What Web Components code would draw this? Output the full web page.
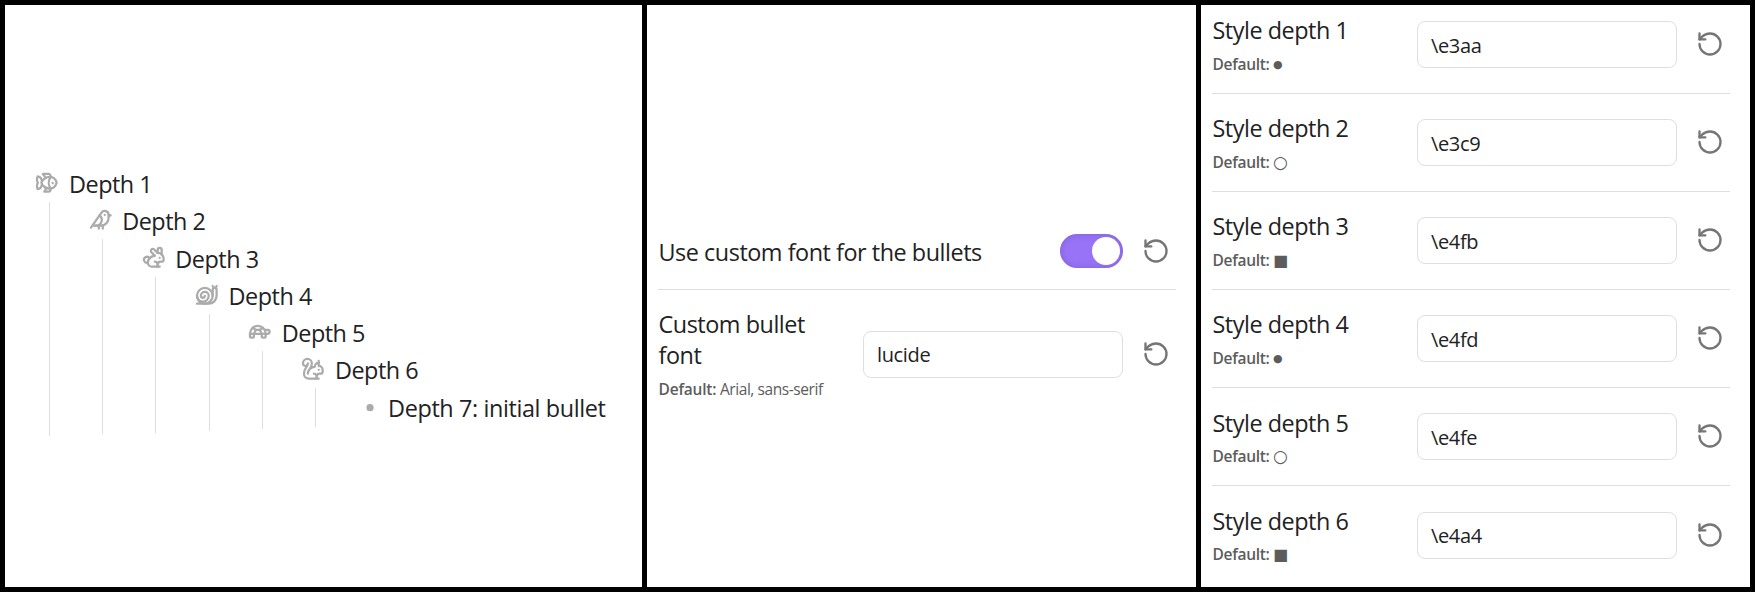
<!DOCTYPE html>
<html lang="en">
<head>
<meta charset="utf-8">
<title>List bullet settings</title>
<style>
html,body{margin:0;height:592px;background:#000;overflow:hidden}
body{font-family:"Open Sans","Noto Sans",sans-serif;color:#222}
</style>
</head>
<body>
<bullet-board>
  <tree-item icon="fish" label="Depth 1" slot="tree">
    <tree-item icon="bird" label="Depth 2">
      <tree-item icon="rabbit" label="Depth 3">
        <tree-item icon="snail" label="Depth 4">
          <tree-item icon="turtle" label="Depth 5">
            <tree-item icon="squirrel" label="Depth 6">
              <tree-item icon="dot" label="Depth 7: initial bullet"></tree-item>
            </tree-item>
          </tree-item>
        </tree-item>
      </tree-item>
    </tree-item>
  </tree-item>

  <setting-row slot="font" style="--h:77px">Use custom font for the bullets<toggle-switch slot="control"></toggle-switch></setting-row>
  <setting-row slot="font" class="last" style="--h:129px">Custom bullet font<span slot="desc"><b style="font-weight:600;letter-spacing:-.2px">Default:</b> Arial, sans-serif</span><text-box slot="control">lucide</text-box></setting-row>

  <setting-row slot="depths">Style depth 1<bullet-default slot="desc" kind="disc">●</bullet-default><text-box slot="control">\e3aa</text-box></setting-row>
  <setting-row slot="depths">Style depth 2<bullet-default slot="desc" kind="circle">○</bullet-default><text-box slot="control">\e3c9</text-box></setting-row>
  <setting-row slot="depths">Style depth 3<bullet-default slot="desc" kind="square">■</bullet-default><text-box slot="control">\e4fb</text-box></setting-row>
  <setting-row slot="depths">Style depth 4<bullet-default slot="desc" kind="disc">●</bullet-default><text-box slot="control">\e4fd</text-box></setting-row>
  <setting-row slot="depths">Style depth 5<bullet-default slot="desc" kind="circle">○</bullet-default><text-box slot="control">\e4fe</text-box></setting-row>
  <setting-row slot="depths" class="last">Style depth 6<bullet-default slot="desc" kind="square">■</bullet-default><text-box slot="control">\e4a4</text-box></setting-row>
</bullet-board>

<script>
const define = (name, html, setup, attrs = []) => {
  customElements.define(name, class extends HTMLElement {
    static observedAttributes = attrs;
    constructor() {
      super();
      this.attachShadow({mode: 'open'}).innerHTML = html;
    }
    connectedCallback() { if (setup) setup(this, this.shadowRoot); }
    attributeChangedCallback() { if (setup) setup(this, this.shadowRoot); }
  });
};

const icons = {
  fish: '<path d="M6.5 12c.94-3.46 4.94-6 8.5-6 3.56 0 6.06 2.54 7 6-.94 3.47-3.44 6-7 6s-7.56-2.53-8.5-6Z"/><path d="M18 12v.5"/><path d="M16 17.93a9.77 9.77 0 0 1 0-11.86"/><path d="M7 10.67C7 8 5.58 5.97 2.73 5.5c-1 1.5-1 5 .23 6.5-1.24 1.5-1.24 5-.23 6.5C5.58 18.03 7 16 7 13.33"/><path d="M10.46 7.26C10.2 5.88 9.17 4.24 8 3h5.8a2 2 0 0 1 1.98 1.67l.23 1.4"/><path d="m16.01 17.93-.23 1.4A2 2 0 0 1 13.8 21H9.5a5.96 5.96 0 0 0 1.49-3.98"/>',
  bird: '<path d="M16 7h.01"/><path d="M3.4 18H12a8 8 0 0 0 8-8V7a4 4 0 0 0-7.28-2.3L2 20"/><path d="m20 7 2 .5-2 .5"/><path d="M10 18v3"/><path d="M14 17.75V21"/><path d="M7 18a6 6 0 0 0 3.84-10.61"/>',
  rabbit: '<path d="M13 16a3 3 0 0 1 2.24 5"/><path d="M18 12h.01"/><path d="M18 21h-8a4 4 0 0 1-4-4 7 7 0 0 1 7-7h.2L9.6 6.4a1 1 0 1 1 2.8-2.8L15.8 7h.2c3.3 0 6 2.7 6 6v1a2 2 0 0 1-2 2h-1a3 3 0 0 0-3 3"/><path d="M20 8.54V4a2 2 0 1 0-4 0v3"/><path d="M7.612 12.524a3 3 0 1 0-1.6 4.3"/>',
  snail: '<path d="M2 13a6 6 0 1 0 12 0 4 4 0 1 0-8 0 2 2 0 0 0 4 0"/><circle cx="10" cy="13" r="8"/><path d="M2 21h12c4.4 0 8-3.6 8-8V7a2 2 0 1 0-4 0v6"/><path d="M18 3 19.1 5.2"/><path d="M22 3 20.9 5.2"/>',
  turtle: '<path d="m12 10 2 4v3a1 1 0 0 0 1 1h2a1 1 0 0 0 1-1v-3a8 8 0 1 0-16 0v3a1 1 0 0 0 1 1h2a1 1 0 0 0 1-1v-3l2-4h4Z"/><path d="M4.82 7.9 8 10"/><path d="M15.18 7.9 12 10"/><path d="M16.93 10H20a2 2 0 0 1 0 4H2"/>',
  squirrel: '<path d="M15.236 22a3 3 0 0 0-2.2-5"/><path d="M16 20a3 3 0 0 1 3-3h1a2 2 0 0 0 2-2v-2a4 4 0 0 0-4-4V4"/><path d="M18 13h.01"/><path d="M18 6a4 4 0 0 0-4 4 7 7 0 0 0-7 7c0-5 4-5 4-10.5a4.5 4.5 0 1 0-9 0 2.5 2.5 0 0 0 5 0C7 10 3 11 3 17c0 2.8 2.2 5 5 5h10"/>',
  dot: '<circle cx="15.3" cy="12.9" r="2.5" fill="currentColor"/>',
  reset: '<path d="M3 12a9 9 0 1 0 9-9 9.75 9.75 0 0 0-6.74 2.74L3 8"/><path d="M3 3v5h5"/>'
};

define('line-icon', `
  <style>
    :host{display:block;flex:none;width:var(--size,24px);height:var(--size,24px)}
    svg{display:block;width:100%;height:100%;fill:none;stroke:currentColor;stroke-width:var(--stroke,2);stroke-linecap:round;stroke-linejoin:round}
  </style>
  <svg viewBox="0 0 24 24"></svg>`,
  (el, root) => { root.querySelector('svg').innerHTML = icons[el.getAttribute('name')] || ''; },
  ['name']);

define('tree-item', `
  <style>
    :host{display:block}
    .row{display:flex;align-items:center;height:37.25px;font-size:23.4px;letter-spacing:-.47px;white-space:nowrap}
    .row.long{letter-spacing:-.38px}
    .row span{padding-top:1.6px}
    line-icon{--size:23.6px;--stroke:2.3;color:#ababab;margin:0 10px 1px .4px}
    .kids{margin-left:14px;border-left:1px solid #dedede;padding:0 0 1.8px 38.2px}
    .leaf{display:none}
  </style>
  <div class="row"><line-icon></line-icon><span></span></div>
  <div class="kids"><slot></slot></div>`,
  (el, root) => {
    root.querySelector('line-icon').setAttribute('name', el.getAttribute('icon'));
    root.querySelector('span').textContent = el.getAttribute('label');
    if (el.getAttribute('icon') === 'dot') {
      root.querySelector('.kids').className = 'leaf';
      root.querySelector('.row').classList.add('long');
    }
  });

define('toggle-switch', `
  <style>
    :host{display:flex;align-items:center;justify-content:flex-end;box-sizing:border-box;width:63px;height:34px;padding:3px;border-radius:17px;background:#9873f7;box-shadow:inset 0 0 6px 1px rgba(80,70,130,.28)}
    i{width:28px;height:28px;border-radius:50%;background:#fff}
  </style><i></i>`);

define('text-box', `
  <style>
    :host{display:flex;align-items:center;box-sizing:border-box;width:260px;height:47px;padding:1px 14px 0 13px;border:1px solid #dfdfdf;border-radius:8px;background:#fff;font-size:20px;letter-spacing:-.35px}
  </style><span><slot></slot></span>`);

define('bullet-default', `
  <style>
    :host{display:flex;align-items:center;height:23px}
    b{font-weight:600;width:60.5px;letter-spacing:-.3px}
    i{font:normal 16px/23px "DejaVu Sans",sans-serif;letter-spacing:0;height:23px;display:block}
    :host([kind=disc]) i{font-size:11px}
    :host([kind=circle]) i{font-size:17px}
  </style><b>Default:</b><i><slot></slot></i>`);

define('setting-row', `
  <style>
    :host{display:flex;align-items:center;box-sizing:border-box;height:var(--h,98.1px);padding-right:6px;border-bottom:1px solid #dedede}
    :host(.last){border-bottom-color:transparent}
    .info{flex:1;min-width:0;margin-right:23.5px;padding:2px 0 0 .5px}
    .name{font-size:23.4px;line-height:30.7px;letter-spacing:-.46px}
    .desc{display:block;font-size:15.5px;line-height:23px;letter-spacing:-.43px;color:#5c5c5c;white-space:nowrap}
    .desc.on{margin-top:7px}
    ::slotted(span){display:block}
    line-icon{--size:28px;--stroke:2;color:#757575;margin:0 0 1px 19px}
  </style>
  <div class="info"><div class="name"><slot></slot></div><div class="desc"><slot name="desc"></slot></div></div>
  <slot name="control"></slot><line-icon name="reset"></line-icon>`,
  (el, root) => {
    if (el.querySelector('[slot=desc]')) root.querySelector('.desc').classList.add('on');
  });

define('bullet-board', `
  <style>
    :host{display:grid;grid-template-columns:637px 549px 549px;gap:5px;box-sizing:border-box;width:1755px;height:592px;padding:5px;background:#000}
    section{background:#fff;overflow:hidden;box-sizing:border-box;min-height:0}
    .tree{padding:159.75px 0 0 30px}
    .font{padding:208px 20px 0 11px}
    .depths{padding:0 20px 0 11px}
    .depths div{margin-top:-9px}
  </style>
  <section class="tree"><slot name="tree"></slot></section>
  <section class="font"><slot name="font"></slot></section>
  <section class="depths"><div><slot name="depths"></slot></div></section>`);
</script>
</body>
</html>
